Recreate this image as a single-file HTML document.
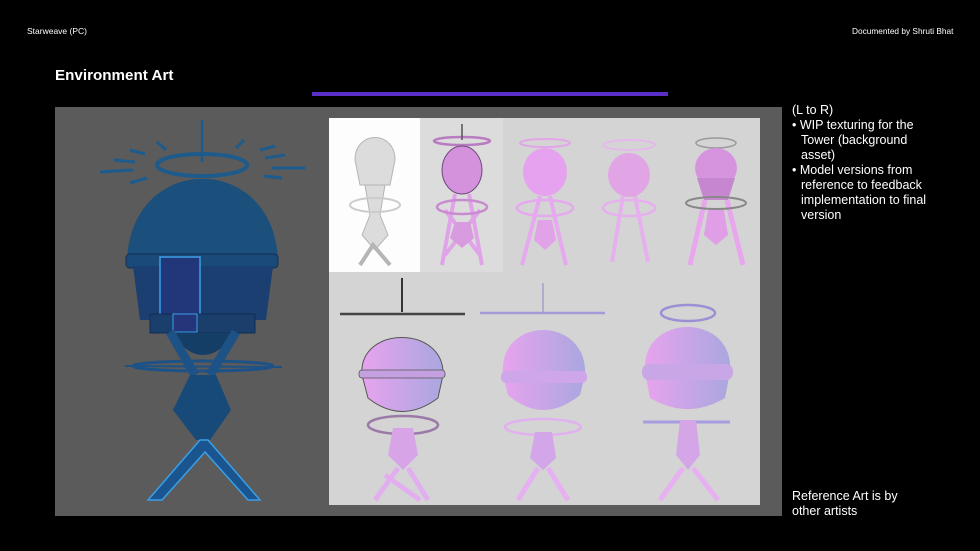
<!DOCTYPE html>
<html><head><meta charset="utf-8"><style>
html,body{margin:0;padding:0;background:#000;}
body{width:980px;height:551px;position:relative;overflow:hidden;font-family:"Liberation Sans",Arial,sans-serif;color:#fff;}
.a{position:absolute;white-space:nowrap;}
.side{position:absolute;left:792px;font-size:12.5px;line-height:15px;}
.side div{white-space:nowrap}
.i{padding-left:9px}
</style></head><body>
<div class="a" style="left:27px;top:26px;font-size:8.5px;">Starweave (PC)</div>
<div class="a" style="left:852px;top:26px;font-size:8.3px;">Documented by Shruti Bhat</div>
<div class="a" style="left:55px;top:67px;font-size:15.2px;font-weight:bold;">Environment Art</div>
<div class="a" style="left:312px;top:92px;width:356px;height:4px;background:#5a2fc8;"></div>
<div class="a" style="left:55px;top:107px;width:727px;height:409px;background:#5b5b5b;"></div>
<div class="a" style="left:329px;top:118px;width:431px;height:387px;background:#d4d4d4;"></div>
<div class="a" style="left:329px;top:118px;width:91px;height:154px;background:#fdfdfd;"></div>
<div class="a" style="left:420px;top:118px;width:83px;height:154px;background:#dcdcdc;"></div>
<svg class="a" style="left:0;top:0" width="980" height="551">
<defs>
<linearGradient id="pk" x1="0" x2="1"><stop offset="0" stop-color="#e9a6ef"/><stop offset="1" stop-color="#b8a8e0"/></linearGradient>
<linearGradient id="pk2" x1="0" x2="1"><stop offset="0" stop-color="#e7a3ee"/><stop offset="1" stop-color="#a9a7df"/></linearGradient>
</defs>
<g>
<ellipse cx="202" cy="165" rx="45" ry="11" fill="none" stroke="#1d5b8c" stroke-width="4"/>
<line x1="202" y1="120" x2="202" y2="162" stroke="#1d5b8c" stroke-width="2.5"/>
<g stroke="#1d5b8c" stroke-width="3">
<line x1="100" y1="172" x2="133" y2="170"/><line x1="114" y1="160" x2="135" y2="162"/><line x1="130" y1="150" x2="145" y2="154"/>
<line x1="272" y1="168" x2="305" y2="168"/><line x1="265" y1="158" x2="285" y2="155"/><line x1="260" y1="150" x2="275" y2="146"/>
<line x1="130" y1="183" x2="147" y2="178"/><line x1="264" y1="176" x2="282" y2="178"/>
<line x1="157" y1="142" x2="166" y2="150"/><line x1="236" y1="148" x2="244" y2="140"/>
</g>
<path d="M127,265 C127,150 278,150 278,265 Z" fill="#1b4f7c"/>
<rect x="126" y="254" width="152" height="14" rx="4" fill="#1a4a78" stroke="#0f2e50"/>
<path d="M133,266 L273,266 L266,320 L140,320 Z" fill="#1b3f70"/>
<rect x="160" y="257" width="40" height="62" fill="#22367a" stroke="#3aa0e8" stroke-width="1.5"/>
<rect x="150" y="314" width="105" height="19" fill="#1a3f6c" stroke="#0f2e50"/>
<rect x="173" y="314" width="24" height="18" fill="#24357a" stroke="#3aa0e8"/>
<path d="M172,333 L235,333 Q220,355 203,355 Q186,355 172,333Z" fill="#153e66"/>
<path d="M170,332 L195,375 M236,332 L210,375" stroke="#1d5286" stroke-width="9"/>
<ellipse cx="203" cy="366" rx="70" ry="5" fill="none" stroke="#1d5286" stroke-width="3"/>
<line x1="125" y1="366" x2="282" y2="367" stroke="#1d5286" stroke-width="2"/>
<path d="M190,375 L216,375 L231,410 L210,440 L196,440 L173,410 Z" fill="#174a78"/>
<path d="M200,440 L148,500 L162,500 L205,452 L248,500 L260,500 L208,440 Z" fill="#1a5590" stroke="#3aa0e8" stroke-width="1.5"/>
</g>
<g fill="url(#pk)">
 <g fill="#dcdcdc" stroke="#b5b5b5"><path d="M355,160 C355,130 395,130 395,160 L390,185 L360,185 Z"/><path d="M365,185 L385,185 L380,215 L388,235 L375,250 L362,235 L370,215Z"/><path d="M360,265 L373,245 L390,265" fill="none" stroke-width="4"/></g>
 <ellipse cx="375" cy="205" rx="25" ry="7" fill="none" stroke="#ccc" stroke-width="2"/>
 <ellipse cx="462" cy="141" rx="28" ry="4" fill="none" stroke="#b87cc0" stroke-width="2.5"/>
 <line x1="462" y1="124" x2="462" y2="140" stroke="#555" stroke-width="1.5"/>
 <ellipse cx="462" cy="170" rx="20" ry="24" fill="#d592dc" stroke="#6a4a7a" stroke-width="1"/>
 <path d="M455,194 L442,265 M469,194 L482,265 M445,210 L480,255 M480,210 L445,255" stroke="#e0a3e8" stroke-width="4"/>
 <ellipse cx="462" cy="207" rx="25" ry="7" fill="none" stroke="#c88bd0" stroke-width="2.5"/>
 <path d="M455,222 L470,222 L474,238 L462,248 L450,238Z" fill="#d99be0"/>
 <ellipse cx="545" cy="143" rx="25" ry="4" fill="none" stroke="#e3a5ea" stroke-width="2"/>
 <ellipse cx="545" cy="172" rx="22" ry="24" fill="#e6a2ee"/>
 <path d="M540,196 L522,265 M550,196 L566,265" stroke="#e6a8ee" stroke-width="4"/>
 <ellipse cx="545" cy="208" rx="28" ry="8" fill="none" stroke="#e6a8ee" stroke-width="2.5"/>
 <path d="M538,220 L552,220 L556,240 L545,250 L534,240Z" fill="#e1a2e8"/>
 <ellipse cx="629" cy="145" rx="26" ry="5" fill="none" stroke="#e6b9ec" stroke-width="2"/>
 <ellipse cx="629" cy="175" rx="21" ry="22" fill="#e1a5e6"/>
 <path d="M623,196 L612,262 M635,196 L648,262" stroke="#e6b0ee" stroke-width="4"/>
 <ellipse cx="629" cy="208" rx="26" ry="8" fill="none" stroke="#e6b0ee" stroke-width="2.5"/>
 <ellipse cx="716" cy="143" rx="20" ry="5" fill="none" stroke="#999" stroke-width="1.5"/>
 <ellipse cx="716" cy="168" rx="21" ry="20" fill="#d794de"/>
 <path d="M697,178 L735,178 L728,200 L704,200Z" fill="#c787d0"/>
 <path d="M705,200 L690,265 M727,200 L743,265" stroke="#e8a6ef" stroke-width="5"/>
 <ellipse cx="716" cy="203" rx="30" ry="6" fill="none" stroke="#888" stroke-width="2"/>
 <path d="M708,210 L724,210 L728,235 L716,245 L704,235Z" fill="#df9ee6"/>
</g>
<g>
 <line x1="340" y1="314" x2="465" y2="314" stroke="#444" stroke-width="2.5"/>
 <line x1="402" y1="278" x2="402" y2="312" stroke="#333" stroke-width="2"/>
 <path d="M362,375 C358,325 445,325 443,375 L438,398 Q402,425 368,398 Z" fill="url(#pk2)" stroke="#555" stroke-width="1"/>
 <rect x="359" y="370" width="86" height="8" rx="3" fill="#c5a0e0" stroke="#555" stroke-width=".8"/>
 <ellipse cx="403" cy="425" rx="35" ry="9" fill="none" stroke="#9c7aa8" stroke-width="2.5"/>
 <path d="M393,428 L413,428 L418,455 L403,470 L388,455Z" fill="#d8a4e8"/>
 <path d="M398,468 L375,500 M408,468 L428,500 M385,475 L420,500" stroke="#e3aef0" stroke-width="5"/>
 <line x1="480" y1="313" x2="605" y2="313" stroke="#a599d8" stroke-width="2.5"/>
 <line x1="543" y1="283" x2="543" y2="312" stroke="#aa9ccc" stroke-width="1.5"/>
 <path d="M503,375 C498,315 588,315 585,375 L580,395 Q543,425 508,395 Z" fill="url(#pk2)"/>
 <rect x="501" y="371" width="86" height="12" rx="5" fill="#d0a6ea"/>
 <ellipse cx="543" cy="427" rx="38" ry="8" fill="none" stroke="#e1b0ef" stroke-width="2.5"/>
 <path d="M535,432 L552,432 L556,458 L543,470 L530,458Z" fill="#d2a6e8"/>
 <path d="M538,468 L518,500 M548,468 L568,500" stroke="#e6b0f2" stroke-width="5"/>
 <ellipse cx="688" cy="313" rx="27" ry="8" fill="none" stroke="#9b90d4" stroke-width="2.5"/>
 <path d="M645,372 C640,312 735,312 730,372 L725,398 Q688,420 650,398 Z" fill="url(#pk2)"/>
 <rect x="642" y="364" width="91" height="16" rx="7" fill="#c9a6e6"/>
 <line x1="643" y1="422" x2="730" y2="422" stroke="#a79ce0" stroke-width="3"/>
 <path d="M680,420 L696,420 L700,455 L688,470 L676,455Z" fill="#d4a6e8"/>
 <path d="M683,468 L660,500 M693,468 L718,500" stroke="#e6b0f2" stroke-width="5"/>
</g>
</svg>
<div class="side" style="top:103px;">
<div>(L to R)</div>
<div>• WIP texturing for the</div>
<div class="i">Tower (background</div>
<div class="i">asset)</div>
<div>• Model versions from</div>
<div class="i">reference to feedback</div>
<div class="i">implementation to final</div>
<div class="i">version</div>
</div>
<div class="side" style="top:489px;">
<div>Reference Art is by</div>
<div>other artists</div>
</div>
</body></html>
